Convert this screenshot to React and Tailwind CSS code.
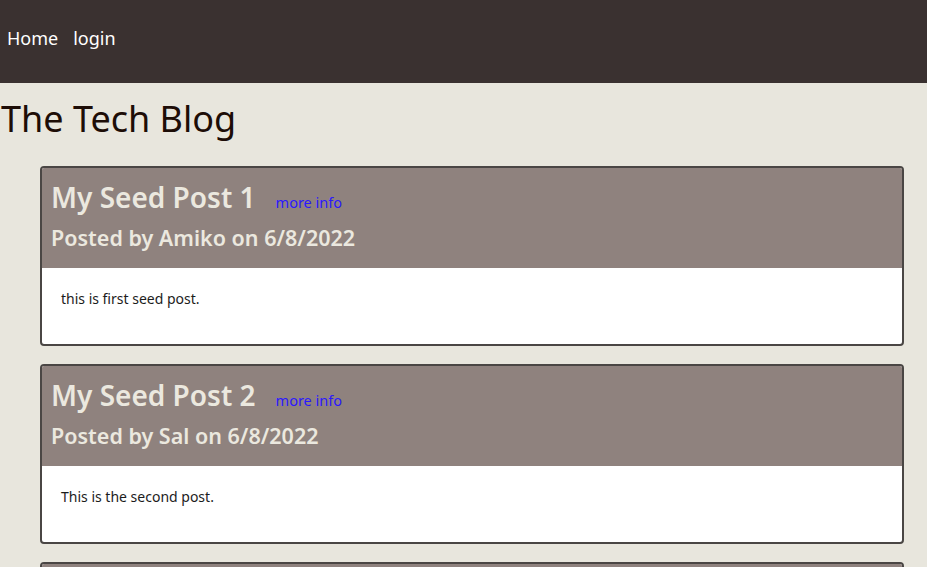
const posts = [
  { id: 1, title: "My Seed Post 1", author: "Amiko", date: "6/8/2022", body: "this is first seed post." },
  { id: 2, title: "My Seed Post 2", author: "Sal", date: "6/8/2022", body: "This is the second post." },
  { id: 3, title: "My Seed Post 3", author: "Amiko", date: "6/8/2022", body: "third post." },
];

function PostCard({ post }) {
  return (
    <div className="rounded-[4px] border-2 border-[#4a4644] overflow-hidden bg-white">
      <div className="bg-[#8f827e] h-[100px] pl-[9px] pt-[9px] text-[#ebe8df]">
        <div className="flex items-baseline gap-[20px]">
          <h2 className="text-[28px] font-semibold leading-[40px]">{post.title}</h2>
          <a href="#" className="text-[14.5px] text-[#2b18ff]">more info</a>
        </div>
        <h3 className="text-[21.5px] font-semibold leading-[30px] mt-[6px]">
          Posted by {post.author} on {post.date}
        </h3>
      </div>
      <div className="h-[76px] pl-[19px] pt-[20px] text-[14px] text-[#1c1c1c]">
        <p>{post.body}</p>
      </div>
    </div>
  );
}

export default function App() {
  return (
    <div className="min-h-screen bg-[#e8e6dd] font-['Noto_Sans',sans-serif]">
      {/* nav */}
      <nav className="h-[83px] bg-[#3a3130] flex items-center gap-[15px] pl-[7px] pb-[7px] text-[18px] text-white">
        <a href="#">Home</a>
        <a href="#">login</a>
      </nav>

      <h1 className="text-[36px] leading-[50px] text-[#1d0d07] pl-[1px] pt-[11px]">The Tech Blog</h1>

      <div className="flex flex-col gap-[18px] ml-[40px] mr-[23px] mt-[22px]">
        {posts.map((p) => (
          <PostCard key={p.id} post={p} />
        ))}
      </div>
    </div>
  );
}
